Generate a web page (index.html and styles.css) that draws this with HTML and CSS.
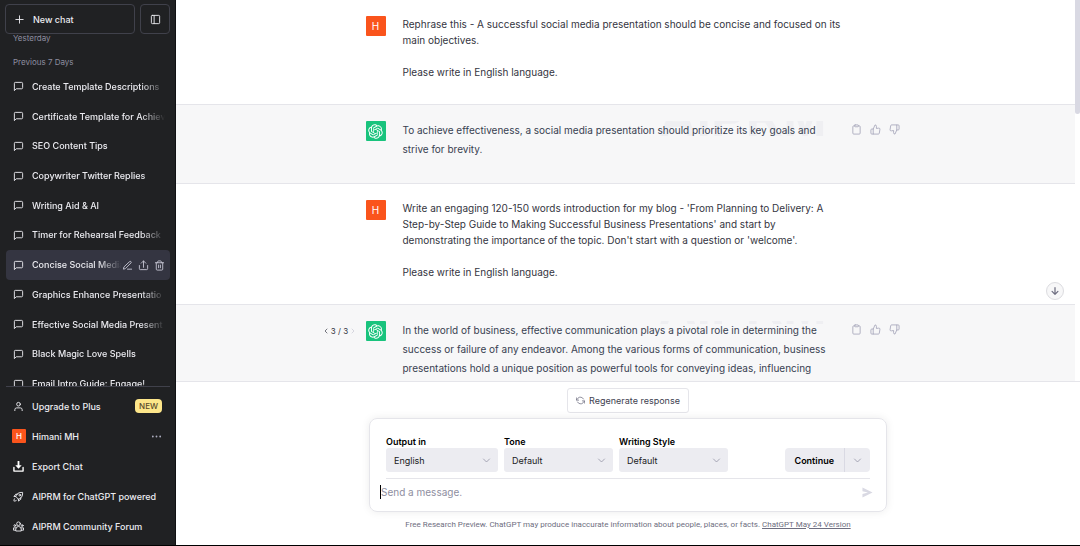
FILE: index.html
```html
<!DOCTYPE html>
<html lang="en">
<head>
  <meta charset="UTF-8" />
  <meta name="viewport" content="width=device-width, initial-scale=1.0"/>
  <title>Concise Social Media</title>
  <link rel="stylesheet" href="styles.css">
</head>
<body>

  <!-- Icon sprite -->
  <svg class="sprite" aria-hidden="true">
    <symbol id="plus" viewBox="0 0 24 24"><path d="M12 4v16M4 12h16"/></symbol>
    <symbol id="panel" viewBox="0 0 24 24"><rect x="3" y="3" width="18" height="18" rx="2"/><path d="M9 3v18"/></symbol>
    <symbol id="chat" viewBox="0 0 24 24"><path d="M21 15a2 2 0 0 1-2 2H7l-4 4V5a2 2 0 0 1 2-2h14a2 2 0 0 1 2 2z"/></symbol>
    <symbol id="pencil" viewBox="0 0 24 24"><path d="M12 20h9M16.5 3.5a2.1 2.1 0 0 1 3 3L7 19l-4 1 1-4z"/></symbol>
    <symbol id="share" viewBox="0 0 24 24"><path d="M3 12v7a2 2 0 0 0 2 2h14a2 2 0 0 0 2-2v-7M7 7l5-5 5 5M12 2v14"/></symbol>
    <symbol id="trash" viewBox="0 0 24 24"><path d="M3 6h18M19 6v14a2 2 0 0 1-2 2H7a2 2 0 0 1-2-2V6M8 6V4a2 2 0 0 1 2-2h4a2 2 0 0 1 2 2v2M10 11v6M14 11v6"/></symbol>
    <symbol id="user" viewBox="0 0 24 24"><path d="M20 21v-2a4 4 0 0 0-4-4H8a4 4 0 0 0-4 4v2"/><circle cx="12" cy="7" r="4"/></symbol>
    <symbol id="dots" viewBox="0 0 24 24"><g fill="currentColor" stroke="none"><circle cx="4" cy="12" r="2"/><circle cx="12" cy="12" r="2"/><circle cx="20" cy="12" r="2"/></g></symbol>
    <symbol id="download" viewBox="0 0 24 24"><path d="M2 14v8h20v-8" stroke-width="3"/><path d="M12 1v9" stroke-width="4"/><path d="M5 9h14l-7 8z" fill="currentColor" stroke="none"/></symbol>
    <symbol id="rocket" viewBox="0 0 24 24"><path d="M9 15l-3-3c1-5 6-10 15-9 1 9-4 14-9 15zM6 12H2l4-5h4M12 18v4l5-4v-4M4 16c-2 1-2 5-2 6 1 0 5 0 6-2"/><circle cx="15" cy="9" r="2"/></symbol>
    <symbol id="people" viewBox="0 0 24 24"><circle cx="12" cy="6" r="4"/><circle cx="4" cy="10" r="2"/><circle cx="20" cy="10" r="2"/><path d="M6 21v-3a5 5 0 0 1 12 0v3zM6 15H1v5h5M18 15h5v5h-5"/></symbol>
    <symbol id="clipboard" viewBox="0 0 24 24"><path d="M16 4h2a2 2 0 0 1 2 2v14a2 2 0 0 1-2 2H6a2 2 0 0 1-2-2V6a2 2 0 0 1 2-2h2"/><rect x="8" y="2" width="8" height="4" rx="1"/></symbol>
    <symbol id="thumb-up" viewBox="0 0 24 24"><path d="M14 9V5a3 3 0 0 0-3-3l-4 9v11h11.3a2 2 0 0 0 2-1.7l1.4-9a2 2 0 0 0-2-2.3zM7 22H4a2 2 0 0 1-2-2v-7a2 2 0 0 1 2-2h3"/></symbol>
    <symbol id="thumb-down" viewBox="0 0 24 24"><path d="M10 15v4a3 3 0 0 0 3 3l4-9V2H5.7a2 2 0 0 0-2 1.7l-1.4 9a2 2 0 0 0 2 2.3zM17 2h3a2 2 0 0 1 2 2v7a2 2 0 0 1-2 2h-3"/></symbol>
    <symbol id="left" viewBox="0 0 24 24"><path d="M15 18l-6-6 6-6"/></symbol>
    <symbol id="right" viewBox="0 0 24 24"><path d="M9 18l6-6-6-6"/></symbol>
    <symbol id="down" viewBox="0 0 24 24"><path d="M4 8l8 8 8-8"/></symbol>
    <symbol id="arrow-down" viewBox="0 0 24 24"><path d="M12 4v16M5 13l7 7 7-7"/></symbol>
    <symbol id="refresh" viewBox="0 0 24 24"><path d="M1 5v6h6M23 19v-6h-6M20 8A9 9 0 0 0 5 6l-4 5M4 16a9 9 0 0 0 15 2l4-5"/></symbol>
    <symbol id="send" viewBox="0 0 24 24"><path d="M1 1l22 11L1 23v-8l12-3L1 9z" fill="currentColor" stroke="none"/></symbol>
    <symbol id="gpt" viewBox="0 0 41 41"><path fill="currentColor" stroke="none" d="M37.5324 16.8707C37.9808 15.5241 38.1363 14.0974 37.9886 12.6859C37.8409 11.2744 37.3934 9.91076 36.676 8.68622C35.6126 6.83404 33.9882 5.3676 32.0373 4.4985C30.0864 3.62941 27.9098 3.40259 25.8215 3.85078C24.8796 2.7893 23.7219 1.94125 22.4257 1.36341C21.1295 0.785575 19.7249 0.491269 18.3058 0.500197C16.1708 0.495044 14.0893 1.16803 12.3614 2.42214C10.6335 3.67624 9.34853 5.44666 8.6917 7.47815C7.30085 7.76286 5.98686 8.3414 4.8377 9.17505C3.68854 10.0087 2.73073 11.0782 2.02839 12.312C0.956464 14.1591 0.498905 16.2988 0.721698 18.4228C0.944492 20.5467 1.83612 22.5449 3.268 24.1293C2.81966 25.4759 2.66413 26.9026 2.81182 28.3141C2.95951 29.7256 3.40701 31.0892 4.12437 32.3138C5.18791 34.1659 6.8123 35.6322 8.76321 36.5013C10.7141 37.3704 12.8907 37.5973 14.9789 37.1492C15.9208 38.2107 17.0786 39.0587 18.3747 39.6366C19.6709 40.2144 21.0755 40.5087 22.4946 40.4998C24.6307 40.5054 26.7133 39.8321 28.4418 38.5772C30.1704 37.3223 31.4556 35.5506 32.1119 33.5179C33.5027 33.2332 34.8167 32.6547 35.9659 31.821C37.115 30.9874 38.0728 29.9178 38.7752 28.684C39.8458 26.8371 40.3023 24.6979 40.0789 22.5748C39.8556 20.4517 38.9639 18.4544 37.5324 16.8707ZM22.4978 37.8849C20.7443 37.8874 19.0459 37.2733 17.6994 36.1501C17.7601 36.117 17.8666 36.0586 17.936 36.0161L25.9004 31.4156C26.1003 31.3019 26.2663 31.137 26.3813 30.9378C26.4964 30.7386 26.5563 30.5124 26.5549 30.2825V19.0542L29.9213 20.998C29.9389 21.0068 29.9541 21.0198 29.9656 21.0359C29.977 21.052 29.9842 21.0707 29.9867 21.0902V30.3889C29.9842 32.375 29.1946 34.2791 27.7909 35.6841C26.3872 37.0892 24.4838 37.8806 22.4978 37.8849ZM6.39227 31.0064C5.51397 29.4888 5.19742 27.7107 5.49804 25.9832C5.55718 26.0187 5.66048 26.0818 5.73461 26.1244L13.699 30.7248C13.8975 30.8408 14.1233 30.902 14.3532 30.902C14.583 30.902 14.8088 30.8408 15.0073 30.7248L24.731 25.1103V28.9979C24.7321 29.0177 24.7283 29.0376 24.7199 29.0556C24.7115 29.0736 24.6988 29.0893 24.6829 29.1012L16.6317 33.7497C14.9096 34.7416 12.8643 35.0097 10.9447 34.4954C9.02506 33.9811 7.38785 32.7263 6.39227 31.0064ZM4.29707 13.6194C5.17156 12.0998 6.55279 10.9364 8.19885 10.3327C8.19885 10.4013 8.19491 10.5228 8.19491 10.6071V19.808C8.19351 20.0378 8.25334 20.2638 8.36823 20.4629C8.48312 20.6619 8.64893 20.8267 8.84863 20.9404L18.5723 26.5542L15.206 28.4979C15.1894 28.5089 15.1703 28.5155 15.1505 28.5173C15.1307 28.5191 15.1107 28.516 15.0924 28.5082L7.04046 23.8557C5.32135 22.8601 4.06716 21.2235 3.55289 19.3046C3.03862 17.3858 3.30624 15.3413 4.29707 13.6194ZM31.955 20.0556L22.2312 14.4411L25.5976 12.4981C25.6142 12.4872 25.6333 12.4805 25.6531 12.4787C25.6729 12.4769 25.6928 12.4801 25.7111 12.4879L33.7631 17.1364C34.9967 17.849 36.0017 18.8982 36.6606 20.1613C37.3194 21.4244 37.6047 22.849 37.4832 24.2684C37.3617 25.6878 36.8382 27.0432 35.9743 28.1759C35.1103 29.3086 33.9415 30.1717 32.6047 30.6641C32.6047 30.5947 32.6047 30.4733 32.6047 30.3889V21.188C32.6066 20.9586 32.5474 20.7328 32.4332 20.5338C32.319 20.3348 32.154 20.1698 31.955 20.0556ZM35.3055 15.0128C35.2464 14.9765 35.1431 14.9142 35.069 14.8717L27.1045 10.2712C26.906 10.1554 26.6803 10.0943 26.4504 10.0943C26.2206 10.0943 25.9948 10.1554 25.7963 10.2712L16.0726 15.8858V11.9982C16.0715 11.9783 16.0753 11.9585 16.0837 11.9405C16.0921 11.9225 16.1048 11.9068 16.1207 11.8949L24.1719 7.25025C25.4053 6.53903 26.8158 6.19376 28.2383 6.25482C29.6608 6.31589 31.0364 6.78077 32.2044 7.59508C33.3723 8.40939 34.2842 9.53945 34.8334 10.8531C35.3826 12.1667 35.5464 13.6095 35.3055 15.0128ZM14.2424 21.9419L10.8752 19.9981C10.8576 19.9893 10.8423 19.9763 10.8309 19.9602C10.8195 19.9441 10.8122 19.9254 10.8098 19.9058V10.6071C10.8107 9.18295 11.2173 7.78848 11.9819 6.58696C12.7466 5.38544 13.8377 4.42659 15.1275 3.82264C16.4173 3.21869 17.8524 2.99464 19.2649 3.1767C20.6775 3.35876 22.0089 3.93941 23.1034 4.85067C23.0427 4.88379 22.937 4.94215 22.8668 4.98473L14.9024 9.58517C14.7025 9.69878 14.5366 9.86356 14.4215 10.0626C14.3065 10.2616 14.2466 10.4877 14.2479 10.7175L14.2424 21.9419ZM16.071 17.9991L20.4018 15.4978L24.7325 17.9975V22.9985L20.4018 25.4983L16.071 22.9985V17.9991Z"/></symbol>
  </svg>

  <aside class="sidebar">
    <div class="sidebar-top">
      <button class="new-chat"><svg><use href="#plus"/></svg>New chat</button>
      <button class="hide-sidebar" aria-label="Hide sidebar"><svg><use href="#panel"/></svg></button>
    </div>

    <nav class="history">
      <h3 class="yesterday">Yesterday</h3>
      <h3>Previous 7 Days</h3>
      <div class="chat-list">
        <a href="#" class="chat-link"><svg><use href="#chat"/></svg><span>Create Template Descriptions</span></a>
        <a href="#" class="chat-link"><svg><use href="#chat"/></svg><span>Certificate Template for Achiev</span></a>
        <a href="#" class="chat-link"><svg><use href="#chat"/></svg><span>SEO Content Tips</span></a>
        <a href="#" class="chat-link"><svg><use href="#chat"/></svg><span>Copywriter Twitter Replies</span></a>
        <a href="#" class="chat-link"><svg><use href="#chat"/></svg><span>Writing Aid &amp; AI</span></a>
        <a href="#" class="chat-link"><svg><use href="#chat"/></svg><span>Timer for Rehearsal Feedback</span></a>
        <div class="chat-link active">
          <svg><use href="#chat"/></svg>
          <a href="#">Concise Social Media</a>
          <div class="chat-tools">
            <button aria-label="Rename"><svg><use href="#pencil"/></svg></button>
            <button aria-label="Share"><svg><use href="#share"/></svg></button>
            <button aria-label="Delete"><svg><use href="#trash"/></svg></button>
          </div>
        </div>
        <a href="#" class="chat-link"><svg><use href="#chat"/></svg><span>Graphics Enhance Presentatio</span></a>
        <a href="#" class="chat-link"><svg><use href="#chat"/></svg><span>Effective Social Media Present</span></a>
        <a href="#" class="chat-link"><svg><use href="#chat"/></svg><span>Black Magic Love Spells</span></a>
        <a href="#" class="chat-link"><svg><use href="#chat"/></svg><span>Email Intro Guide: Engage!</span></a>
      </div>
    </nav>

    <div class="sidebar-bottom">
      <a href="#" class="menu-link"><svg><use href="#user"/></svg><span>Upgrade to Plus</span><b class="new-tag">NEW</b></a>
      <button class="menu-link"><i class="mini-avatar">H</i><span>Himani MH</span><svg class="dots"><use href="#dots"/></svg></button>
      <button class="menu-link"><svg class="bright"><use href="#download"/></svg><span>Export Chat</span></button>
      <a href="#" class="menu-link"><svg><use href="#rocket"/></svg><span>AIPRM for ChatGPT powered</span></a>
      <a href="#" class="menu-link"><svg><use href="#people"/></svg><span>AIPRM Community Forum</span></a>
    </div>
  </aside>

  <main>
    <div class="thread">
      <div class="messages">
        <article class="message">
          <div class="row">
            <div class="avatar">H</div>
            <div class="text">
              <p>Rephrase this - A successful social media presentation should be concise and focused on its main objectives.</p>
              <p>Please write in English language.</p>
            </div>
          </div>
        </article>

        <article class="message reply">
          <div class="row">
            <div class="avatar bot"><svg><use href="#gpt"/></svg></div>
            <div class="text">
              <div class="watermark" aria-hidden="true">AIPRM</div>
              <p>To achieve effectiveness, a social media presentation should prioritize its key goals and strive for brevity.</p>
            </div>
            <div class="actions">
              <button aria-label="Copy"><svg><use href="#clipboard"/></svg></button>
              <button aria-label="Good response"><svg><use href="#thumb-up"/></svg></button>
              <button aria-label="Bad response"><svg><use href="#thumb-down"/></svg></button>
            </div>
          </div>
        </article>

        <article class="message">
          <div class="row">
            <div class="avatar">H</div>
            <div class="text">
              <p>Write an engaging 120-150 words introduction for my blog - 'From Planning to Delivery: A Step-by-Step Guide to Making Successful Business Presentations' and start by demonstrating the importance of the topic. Don't start with a question or 'welcome'.</p>
              <p>Please write in English language.</p>
            </div>
          </div>
        </article>

        <article class="message reply">
          <div class="row">
            <div class="pager">
              <button aria-label="Previous"><svg><use href="#left"/></svg></button>
              <span>3 / 3</span>
              <button aria-label="Next" disabled><svg><use href="#right"/></svg></button>
            </div>
            <div class="avatar bot"><svg><use href="#gpt"/></svg></div>
            <div class="text">
              <div class="watermark thin" aria-hidden="true">AIPRM</div>
              <p>In the world of business, effective communication plays a pivotal role in determining the success or failure of any endeavor. Among the various forms of communication, business presentations hold a unique position as powerful tools for conveying ideas, influencing</p>
            </div>
            <div class="actions">
              <button aria-label="Copy"><svg><use href="#clipboard"/></svg></button>
              <button aria-label="Good response"><svg><use href="#thumb-up"/></svg></button>
              <button aria-label="Bad response"><svg><use href="#thumb-down"/></svg></button>
            </div>
          </div>
        </article>
      </div>
      <div class="scrollbar"><div class="thumb"></div></div>
      <button class="to-bottom" aria-label="Scroll to bottom"><svg><use href="#arrow-down"/></svg></button>
    </div>

    <div class="composer">
      <button class="regenerate"><svg><use href="#refresh"/></svg>Regenerate response</button>

      <form class="prompt-box">
        <div class="options">
          <div class="field output">
            <label for="language">Output in</label>
            <div class="select"><select id="language"><option>English</option></select><svg><use href="#down"/></svg></div>
          </div>
          <div class="field">
            <label for="tone">Tone</label>
            <div class="select"><select id="tone"><option>Default</option></select><svg><use href="#down"/></svg></div>
          </div>
          <div class="field">
            <label for="style">Writing Style</label>
            <div class="select"><select id="style"><option>Default</option></select><svg><use href="#down"/></svg></div>
          </div>
          <div class="continue">
            <button type="button">Continue</button>
            <button type="button" class="more" aria-label="More actions"><svg><use href="#down"/></svg></button>
          </div>
        </div>
        <div class="input-row">
          <input type="text" class="message-input" aria-label="Message" placeholder="Send a message.">
          <button type="button" class="send" aria-label="Send"><svg><use href="#send"/></svg></button>
        </div>
      </form>

      <p class="footnote">Free Research Preview. ChatGPT may produce inaccurate information about people, places, or facts. <a href="#">ChatGPT May 24 Version</a></p>
    </div>
  </main>

</body>
</html>
```
FILE: styles.css
```css
:root {
  --dark: #202123;
  --dark-hover: #343541;
  --dark-line: #40414b;
  --orange: #fa541c;
  --green: #19c37d;
  --line: #e5e5ea;
  --field: #ececf1;
  --text: #343541;
}

* {
  box-sizing: border-box;
}

body {
  margin: 0;
  height: 100vh;
  display: flex;
  overflow: hidden;
  border-bottom: 1px solid #000;
  background: #fff;
  color: var(--text);
  font-family: Inter, Roboto, sans-serif;
  font-size: 10px;
}

svg {
  width: 11px;
  height: 11px;
  flex: none;
  fill: none;
  stroke: currentColor;
  stroke-width: 2;
  stroke-linecap: round;
  stroke-linejoin: round;
}

.sprite {
  display: none;
}

button, input, select {
  font: inherit;
  color: inherit;
  margin: 0;
  padding: 0;
  border: none;
  background: none;
}

button {
  display: flex;
  align-items: center;
  cursor: pointer;
}

p, h3 {
  margin: 0;
}

/* Sidebar */

.sidebar {
  width: 176px;
  flex: none;
  display: flex;
  flex-direction: column;
  background: var(--dark);
  border-right: 1px solid #101113;
  color: #ececf1;
  font-size: 9px;
  font-weight: 500;
}

.sidebar a {
  color: inherit;
  text-decoration: none;
}

.sidebar-top {
  display: flex;
  gap: 5px;
  padding: 4px 5px 0;
}

.sidebar-top button {
  height: 30px;
  border: 1px solid var(--dark-line);
  border-radius: 4px;
}

.new-chat {
  flex: 1;
  gap: 8px;
  padding-left: 8px;
}

.hide-sidebar {
  width: 30px;
  justify-content: center;
}

.history {
  flex: 1;
  min-height: 0;
  overflow: hidden;
  padding: 0 5px 0 6px;
}

.history h3 {
  padding: 0 7px;
  margin: 12px 0 4px;
  color: #8e8ea0;
  font-size: 8px;
  font-weight: 400;
  line-height: 12px;
}

.history .yesterday {
  margin: -2px 0 0;
}

.chat-list {
  display: grid;
  grid-template-columns: minmax(0, 1fr);
  grid-auto-rows: 1fr;
  height: 327px;
}

.chat-link {
  display: flex;
  align-items: center;
  gap: 8px;
  padding: 0 5px 0 7px;
  border-radius: 4px;
}

.chat-link > span,
.chat-link > a {
  flex: 1;
  min-width: 0;
  overflow: hidden;
  white-space: nowrap;
  line-height: 16px;
  -webkit-mask-image: linear-gradient(to left, transparent, #000 24px);
  mask-image: linear-gradient(to left, transparent, #000 24px);
}

.chat-link.active {
  gap: 0;
  background: var(--dark-hover);
}

.chat-link.active > a {
  margin-left: 8px;
}

.chat-tools {
  display: flex;
  gap: 5px;
  color: #c5c5d2;
}

.sidebar-bottom {
  display: flex;
  flex-direction: column;
  margin: 0 5px 0 6px;
  padding: 4px 0;
  border-top: 1px solid var(--dark-line);
}

.menu-link {
  display: flex;
  align-items: center;
  gap: 8px;
  height: 30px;
  padding: 0 8px 0 7px;
  text-align: left;
}

.menu-link span {
  flex: 1;
  white-space: nowrap;
}

.bright {
  color: #fff;
}

.mini-avatar {
  display: grid;
  place-items: center;
  width: 14px;
  height: 14px;
  margin: 0 -2px 0 -1px;
  background: var(--orange);
  border-radius: 1px;
  color: #fff;
  font-size: 8px;
  font-style: normal;
}

.menu-link .dots {
  color: #acacbe;
}

.new-tag {
  padding: 0 4px;
  border-radius: 4px;
  background: #fde68a;
  color: #5a4a2a;
  font-size: 8px;
  font-weight: 500;
  line-height: 14px;
}

/* Conversation */

main {
  flex: 1;
  min-width: 0;
  display: flex;
  flex-direction: column;
}

.thread {
  position: relative;
  flex: 1;
  min-height: 0;
  display: flex;
  overflow: hidden;
}

.messages {
  flex: 1;
}

.message {
  padding: 16px 0 24px;
  border-bottom: 1px solid var(--line);
}

.reply {
  background: #f7f7f8;
}

.row {
  display: flex;
  align-items: flex-start;
  gap: 17px;
  max-width: 520px;
  margin: 0 auto;
}

.avatar {
  display: grid;
  place-items: center;
  width: 20px;
  height: 20px;
  flex: none;
  background: var(--orange);
  border-radius: 1px;
  color: #fff;
}

.avatar.bot {
  background: var(--green);
}

.avatar svg {
  width: 15px;
  height: 15px;
}

.text {
  position: relative;
  flex: 1;
  max-width: 440px;
  line-height: 16px;
}

.text p {
  position: relative;
}

.text p + p {
  margin-top: 16px;
}

.reply .text {
  line-height: 19px;
  color: #374151;
}

.watermark {
  position: absolute;
  top: 0;
  right: 15px;
  display: flex;
  align-items: flex-end;
  height: 16px;
  overflow: hidden;
  color: #efeff2;
  font-family: "Liberation Sans", sans-serif;
  font-size: 52px;
  font-weight: bold;
  line-height: 38px;
}

.watermark.thin {
  height: 4px;
}

.actions {
  display: flex;
  gap: 8px;
  margin: 3px -14px 0 -8px;
  color: #acacbe;
}

.pager {
  display: flex;
  align-items: center;
  justify-content: space-between;
  width: 36px;
  height: 20px;
  margin: 0 -9px 0 -44px;
  font-size: 8px;
}

.pager svg {
  width: 8px;
  height: 8px;
}

.pager button:disabled {
  color: #c5c5d2;
}

.scrollbar {
  width: 5px;
}

.thumb {
  height: 30%;
  background: #d9d9e3;
  border-radius: 0 0 3px 3px;
}

.to-bottom {
  position: absolute;
  right: 16px;
  bottom: 81px;
  width: 18px;
  height: 18px;
  justify-content: center;
  border: 1px solid #dcdce0;
  border-radius: 50%;
  background: #f7f7f8;
  color: #6e6e80;
}

.to-bottom svg {
  width: 10px;
  height: 10px;
  stroke-width: 3;
}

/* Composer */

.composer {
  display: flex;
  flex-direction: column;
  align-items: center;
  padding: 6px 16px 14px;
  border-top: 1px solid var(--line);
}

.regenerate {
  gap: 4px;
  height: 25px;
  padding: 0 8px;
  border: 1px solid var(--line);
  border-radius: 3px;
  color: #40414f;
  font-size: 9px;
}

.regenerate svg {
  width: 9px;
  height: 9px;
  color: #6e6e80;
}

.prompt-box {
  width: 100%;
  max-width: 518px;
  margin: 5px 0 7px;
  padding: 16px 10px 12px;
  border: 1px solid var(--line);
  border-radius: 8px;
  box-shadow: 0 0 8px rgba(0,0,0,0.08);
}

.options {
  display: flex;
  align-items: flex-end;
  gap: 6px;
  margin: 0 6px;
  padding-bottom: 6px;
  border-bottom: 1px solid var(--line);
  font-size: 9px;
}

.field {
  width: 109px;
}

.field.output {
  width: 112px;
}

.field label {
  display: block;
  color: #000;
  font-weight: 600;
  line-height: 13px;
}

.select {
  display: grid;
  align-items: center;
}

.select select,
.select svg {
  grid-area: 1 / 1;
}

.select select {
  appearance: none;
  height: 24px;
  padding: 0 8px;
  border-radius: 3px;
  background: var(--field);
  color: #202123;
}

.select svg {
  justify-self: end;
  margin-right: 7px;
}

.select svg,
.more svg {
  width: 9px;
  height: 9px;
  color: #8e8ea0;
  pointer-events: none;
}

.continue {
  display: flex;
  margin-left: auto;
}

.continue button {
  height: 24px;
  padding: 0 10px;
  border-radius: 4px 0 0 4px;
  background: var(--field);
  color: #000;
  font-weight: 600;
}

.continue .more {
  padding: 0 8px;
  border-left: 1px solid #d9d9e3;
  border-radius: 0 4px 4px 0;
}

.input-row {
  display: flex;
  align-items: center;
  margin-top: 6px;
}

.message-input {
  flex: 1;
  height: 14px;
  border-left: 1px solid #000;
  outline: none;
}

.message-input::placeholder {
  color: #8e8ea0;
}

.send {
  margin-right: 3px;
  color: #d9d9e3;
}

.footnote {
  color: #6e6e80;
  font-family: Roboto, sans-serif;
  font-size: 8px;
  line-height: 12px;
}

.footnote a {
  color: inherit;
}
```
